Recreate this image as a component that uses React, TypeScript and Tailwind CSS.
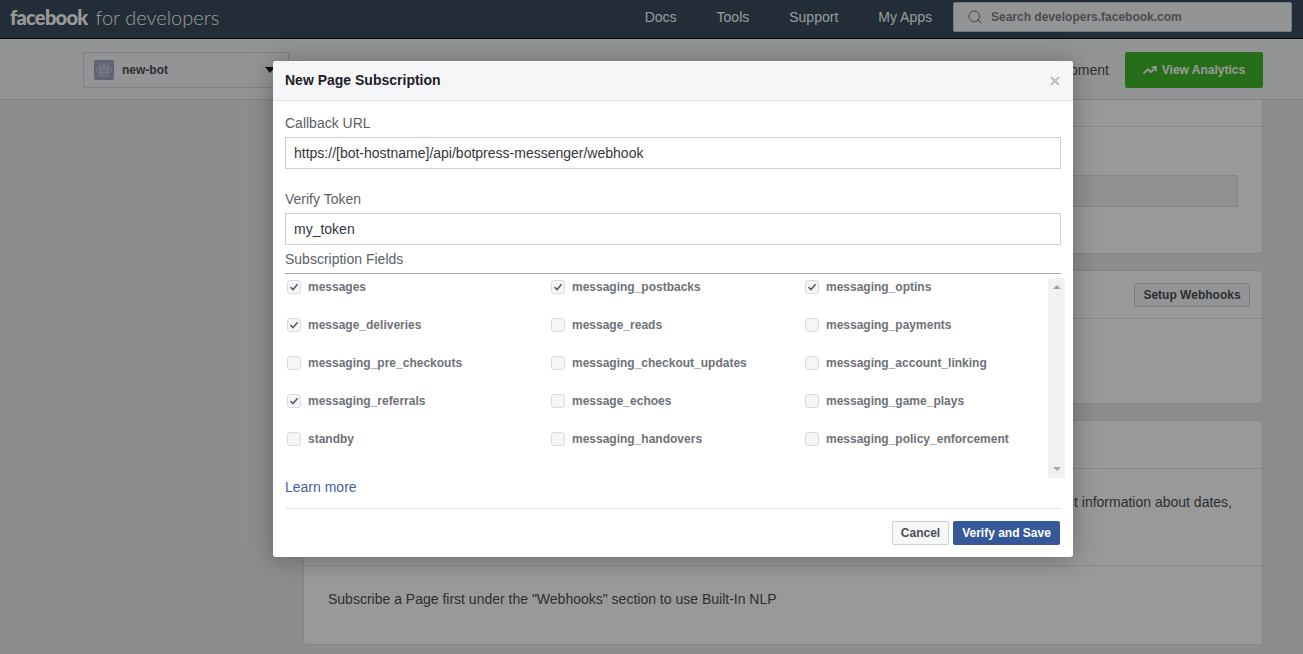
import { Search, TrendingUp } from "lucide-react";

const fields = [
  ["messages", "messaging_postbacks", "messaging_optins"],
  ["message_deliveries", "message_reads", "messaging_payments"],
  ["messaging_pre_checkouts", "messaging_checkout_updates", "messaging_account_linking"],
  ["messaging_referrals", "message_echoes", "messaging_game_plays"],
  ["standby", "messaging_handovers", "messaging_policy_enforcement"],
];

const checked = ["messages", "messaging_postbacks", "messaging_optins", "message_deliveries", "messaging_referrals"];

function Field({ name }: { name: string }) {
  const on = checked.includes(name);
  return (
    <div className="flex h-[38px] items-start pt-[6px]">
      <span className="flex h-[14px] w-[14px] items-center justify-center rounded-[3px] border border-[#d9dbde] bg-[#f5f6f7]">
        {on && (
          <svg width="10" height="10" viewBox="0 0 10 10">
            <path d="M1.5 5.2 L4 7.6 L8.6 2.2" fill="none" stroke="#5b5f66" strokeWidth="1.6" />
          </svg>
        )}
      </span>
      <span className="ml-[7px] text-[12px] leading-[14px] font-bold text-[#6f7277]">{name}</span>
    </div>
  );
}

function AppIcon() {
  return (
    <span className="flex h-[20px] w-[20px] items-center justify-center rounded-[2px] bg-[#9ea5c0]">
      <svg width="18" height="18" viewBox="0 0 18 18" fill="none" stroke="#dfe3ee" strokeWidth="0.7">
        <ellipse cx="9" cy="9" rx="7.5" ry="3" />
        <ellipse cx="9" cy="9" rx="7.5" ry="3" transform="rotate(60 9 9)" />
        <ellipse cx="9" cy="9" rx="7.5" ry="3" transform="rotate(120 9 9)" />
        <circle cx="9" cy="9" r="1.4" />
      </svg>
    </span>
  );
}

function Background() {
  return (
    <div className="flex h-full flex-col bg-[#e9ebee] font-['Liberation_Sans',sans-serif] text-[14px] text-[#4b4f56]">
      <nav className="flex h-[39px] shrink-0 items-center border-b border-black bg-[#3a4b5e] pb-[4px] pl-[10px] pr-[11px] text-white">
        <span className="font-['Lato',sans-serif] text-[20px] font-black tracking-[-0.7px]">facebook</span>
        <span className="ml-[8px] font-['Lato',sans-serif] text-[20px] font-light">for developers</span>
        <div className="ml-auto flex items-center">
          <a className="mr-[40px]">Docs</a>
          <a className="mr-[40px]">Tools</a>
          <a className="mr-[40px]">Support</a>
          <a className="mr-[21px]">My Apps</a>
          <div className="flex h-[30px] w-[339px] items-center rounded-[2px] border border-[#ccc] bg-[#f6f7f9] pl-[13px] text-[12px] font-bold text-[#7d8189]">
            <Search size={16} strokeWidth={1.5} className="text-[#6f737b]" />
            <span className="ml-[8px]">Search developers.facebook.com</span>
          </div>
        </div>
      </nav>

      <div className="flex h-[61px] shrink-0 items-center border-b border-[#d3d5d8] bg-[#f6f7f9] pl-[83px] pr-[40px] pt-[2px]">
        <div className="flex h-[36px] w-[206px] items-center rounded-[2px] border border-[#d3d6db] bg-[#f6f7f9] pl-[10px] pr-[13px]">
          <AppIcon />
          <span className="ml-[8px] text-[12px] font-bold">new-bot</span>
          <span className="ml-auto h-0 w-0 border-x-[5px] border-t-[6px] border-x-transparent border-t-[#1c1e21]" />
        </div>
        <span className="ml-auto mr-[16px]">Development</span>
        <button className="flex h-[36px] w-[138px] items-center justify-center rounded-[2px] bg-[#42b72a] text-[12px] font-bold text-white">
          <TrendingUp size={14} strokeWidth={3} className="mr-[5px]" />
          View Analytics
        </button>
      </div>

      <div className="ml-[303px] mr-[40px] flex flex-col gap-[16px]">
        <section className="h-[154px] rounded-b-[3px] border border-t-0 border-[#dddfe2] bg-white">
          <div className="h-[27px] border-b border-[#e5e5e5]" />
          <div className="mx-[24px] mt-[48px] h-[32px] rounded-[2px] border border-[#dddfe2] bg-[#f1f2f4]" />
        </section>
        <section className="h-[134px] rounded-[3px] border border-[#dddfe2] bg-white">
          <div className="flex h-[48px] items-center justify-end border-b border-[#e5e5e5] pr-[12px]">
            <button className="flex h-[24px] w-[116px] items-center justify-center rounded-[2px] border border-[#ccd0d5] bg-[#f6f7f9] text-[12px] font-bold">
              Setup Webhooks
            </button>
          </div>
        </section>
        <section className="h-[225px] rounded-[3px] border border-[#dddfe2] bg-white">
          <div className="h-[48px] border-b border-[#e5e5e5]" />
          <div className="h-[97px] border-b border-[#e5e5e5] pr-[30px] pt-[25px] text-right leading-[16px]">
            Built-In NLP can detect information about dates,
          </div>
          <p className="pl-[24px] pt-[25px] leading-[16px]">
            Subscribe a Page first under the "Webhooks" section to use Built-In NLP
          </p>
        </section>
      </div>
    </div>
  );
}

export default function App() {
  return (
    <div className="relative h-screen overflow-hidden">
      <Background />
      <div className="absolute inset-0 bg-black/40" />
      <div className="absolute left-[273px] top-[61px] h-[496px] w-[800px] rounded-[3px] bg-white font-['Liberation_Sans',sans-serif] text-[14px] text-[#5b5f66] shadow-[0_2px_26px_rgba(0,0,0,0.3)]">
        <header className="flex h-[40px] items-center justify-between rounded-t-[3px] border-b border-[#e5e5e5] bg-[#f5f6f7] px-[12px]">
          <h1 className="text-[14px] font-bold text-[#1d2129]">New Page Subscription</h1>
          <svg width="12" height="12" viewBox="0 0 12 12" className="mt-[1px]">
            <path d="M2 2 L10 10 M10 2 L2 10" stroke="#bfc3c9" strokeWidth="2.4" />
          </svg>
        </header>
        <div className="px-[12px]">
          <label className="mt-[13px] block leading-[18px]">Callback URL</label>
          <div className="mt-[5px] flex h-[32px] items-center border border-[#ccd0d5] pl-[8px] text-[#33363b]">
            https://[bot-hostname]/api/botpress-messenger/webhook
          </div>
          <label className="mt-[21px] block leading-[18px]">Verify Token</label>
          <div className="mt-[5px] flex h-[32px] items-center border border-[#ccd0d5] pl-[8px] text-[#33363b]">
            my_token
          </div>
          <label className="mt-[5px] block leading-[18px]">Subscription Fields</label>
          <div className="mt-[5px] border-t border-[#a8a8a8]" />
          <div className="-mr-[4px] flex h-[204px]">
            <div className="flex-1 pl-[2px]">
              <div className="grid grid-cols-[264px_254px_1fr]">
                {fields.flat().map((name) => (
                  <Field key={name} name={name} />
                ))}
              </div>
            </div>
            <div className="mt-[4px] flex w-[17px] flex-col items-center justify-between bg-[#f1f1f1] py-[3px]">
              <span className="mt-[4px] h-0 w-0 border-x-[4px] border-b-[4px] border-x-transparent border-b-[#a3a3a3]" />
              <span className="mb-[4px] h-0 w-0 border-x-[4px] border-t-[4px] border-x-transparent border-t-[#a3a3a3]" />
            </div>
          </div>
          <a className="block leading-[18px] text-[#3f5fa5]">Learn more</a>
          <div className="mt-[12px] border-t border-[#e5e5e5]" />
          <div className="mr-[1px] mt-[12px] flex justify-end gap-[4px] text-[12px] font-bold">
            <button className="h-[24px] w-[57px] rounded-[2px] border border-[#ccd0d5] bg-[#f6f7f9] text-[#4b4f56]">Cancel</button>
            <button className="h-[24px] w-[107px] rounded-[2px] bg-[#365899] text-white">Verify and Save</button>
          </div>
        </div>
      </div>
    </div>
  );
}
